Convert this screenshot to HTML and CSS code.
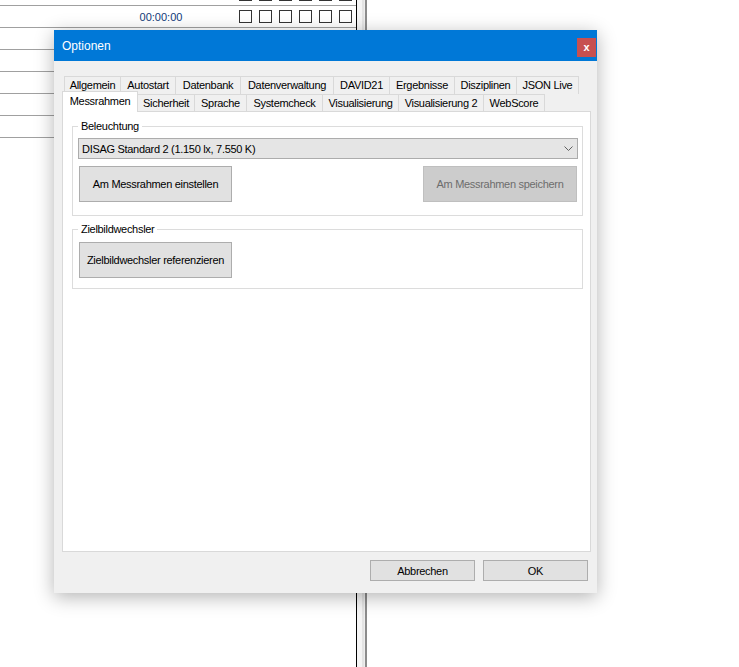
FILE: index.html
```html
<!DOCTYPE html>
<html lang="de">
<head>
    <meta charset="UTF-8">
    <title>Optionen</title>
    <link rel="stylesheet" href="styles.css">
</head>
<body>
<div class="desktop">
    <div class="list">
        <div class="row row-cut">
            <span class="cell-name"></span>
            <span class="cell-time"></span>
            <span class="checks"><i></i><i></i><i></i><i></i><i></i><i></i></span>
        </div>
        <div class="row">
            <span class="cell-name"></span>
            <span class="cell-time">00:00:00</span>
            <span class="checks"><i></i><i></i><i></i><i></i><i></i><i></i></span>
        </div>
        <div class="row"></div>
        <div class="row"></div>
        <div class="row"></div>
        <div class="row"></div>
        <div class="row"></div>
    </div>
    <div class="splitter"></div>
    <div class="view"></div>

    <div class="dialog">
        <div class="titlebar">
            <span class="title">Optionen</span>
            <span class="close">x</span>
        </div>
        <div class="dialog-body">
            <div class="tabs">
                <div class="tab-row back">
                    <span class="tab">Allgemein</span>
                    <span class="tab">Autostart</span>
                    <span class="tab">Datenbank</span>
                    <span class="tab">Datenverwaltung</span>
                    <span class="tab">DAVID21</span>
                    <span class="tab">Ergebnisse</span>
                    <span class="tab">Disziplinen</span>
                    <span class="tab">JSON Live</span>
                </div>
                <div class="tab-row front">
                    <span class="tab selected">Messrahmen</span>
                    <span class="tab">Sicherheit</span>
                    <span class="tab">Sprache</span>
                    <span class="tab">Systemcheck</span>
                    <span class="tab">Visualisierung</span>
                    <span class="tab">Visualisierung 2</span>
                    <span class="tab">WebScore</span>
                </div>
                <div class="tab-page">
                    <div class="group light">
                        <span class="group-label">Beleuchtung</span>
                        <div class="combo">
                            <span>DISAG Standard 2 (1.150 lx, 7.550 K)</span>
                            <svg width="9" height="5" viewBox="0 0 9 5"><polyline points="0.5,0.5 4.5,4.5 8.5,0.5" fill="none" stroke="#606060" stroke-width="1"/></svg>
                        </div>
                        <div class="light-buttons">
                            <button class="btn wide">Am Messrahmen einstellen</button>
                            <button class="btn wide save" disabled>Am Messrahmen speichern</button>
                        </div>
                    </div>
                    <div class="group changer">
                        <span class="group-label">Zielbildwechsler</span>
                        <button class="btn wide">Zielbildwechsler referenzieren</button>
                    </div>
                </div>
            </div>
            <div class="dialog-buttons">
                <button class="btn small">Abbrechen</button>
                <button class="btn small">OK</button>
            </div>
        </div>
    </div>
</div>
</body>
</html>
```

FILE: styles.css
```css
body {
    margin: 0;
    font-family: "Liberation Sans", Arial, sans-serif;
    font-size: 11px;
    color: #000;
}

.desktop {
    position: relative;
    display: flex;
    width: 739px;
    height: 667px;
    overflow: hidden;
    background: #fff;
}

/* background list */
.list {
    width: 356px;
}

.row {
    display: flex;
    align-items: center;
    height: 21px;
    border-bottom: 1px solid #a0a0a0;
}

.row-cut {
    margin-top: -16px;
}

.cell-name {
    width: 111px;
}

.cell-time {
    width: 100px;
    text-align: center;
    color: #123a7a;
}

.checks {
    display: flex;
    gap: 7px;
    margin-left: 28px;
}

.checks i {
    width: 13px;
    height: 13px;
    box-sizing: border-box;
    border: 1px solid #333;
    background: #fff;
}

.splitter {
    width: 11px;
    box-sizing: border-box;
    border-left: 1px solid #000;
    border-right: 2px solid #8c8c8c;
    background: linear-gradient(to right, #f5f5f5 0, #f5f5f5 5px, #e4e4e4 5px, #e4e4e4 7px, #eeeeee 7px);
}

.view {
    flex: 1;
}

/* dialog */
.dialog {
    position: absolute;
    left: 54px;
    top: 30px;
    width: 543px;
    height: 563px;
    display: flex;
    flex-direction: column;
    background: #f0f0f0;
    box-shadow: 0 4px 18px rgba(0, 0, 0, 0.3);
}

.titlebar {
    display: flex;
    align-items: center;
    height: 31px;
    padding-left: 8px;
    background: #0078d7;
}

.title {
    color: #fff;
    font-size: 12px;
}

.close {
    align-self: flex-start;
    margin: 8px 1px 0 auto;
    width: 19px;
    height: 19px;
    line-height: 18px;
    text-align: center;
    background: #c75050;
    color: #fff;
    font-weight: bold;
    font-size: 11px;
}

.dialog-body {
    flex: 1;
    display: flex;
    flex-direction: column;
    padding: 15px 6px 12px 8px;
}

.tabs {
    flex: 1;
    display: flex;
    flex-direction: column;
}

.tab-row {
    display: flex;
    align-items: flex-start;
}

.tab {
    box-sizing: border-box;
    text-align: center;
    white-space: nowrap;
    letter-spacing: -0.3px;
    background: #f0f0f0;
    border-top: 1px solid #d9d9d9;
}

.back {
    height: 18px;
    margin-left: 2px;
}

.back .tab {
    height: 18px;
    line-height: 17px;
    border-left: 1px solid #d9d9d9;
}

.back .tab:last-child { border-right: 1px solid #d9d9d9; }

.back .tab:nth-child(1) { width: 56px; }
.back .tab:nth-child(2) { width: 55px; }
.back .tab:nth-child(3) { width: 65px; }
.back .tab:nth-child(4) { width: 93px; }
.back .tab:nth-child(5) { width: 56px; }
.back .tab:nth-child(6) { width: 65px; }
.back .tab:nth-child(7) { width: 62px; }
.back .tab:nth-child(8) { width: 63px; }

.front {
    height: 17px;
}

.front .tab {
    height: 17px;
    line-height: 16px;
    border-right: 1px solid #d9d9d9;
}

.front .tab.selected {
    position: relative;
    z-index: 1;
    height: 21px;
    margin-top: -3px;
    padding-top: 2px;
    line-height: 14px;
    background: #fff;
    border-left: 1px solid #d9d9d9;
}

.front .tab:nth-child(1) { width: 76px; }
.front .tab:nth-child(2) { width: 57px; }
.front .tab:nth-child(3) { width: 52px; }
.front .tab:nth-child(4) { width: 76px; }
.front .tab:nth-child(5) { width: 76px; }
.front .tab:nth-child(6) { width: 85px; }
.front .tab:nth-child(7) { width: 61px; }

.tab-page {
    flex: 1;
    padding: 14px 7px 0 9px;
    background: #fff;
    border: 1px solid #d9d9d9;
}

.group {
    position: relative;
    border: 1px solid #dcdcdc;
}

.group-label {
    position: absolute;
    top: -7px;
    left: 5px;
    padding: 0 3px;
    line-height: 13px;
    background: #fff;
    letter-spacing: -0.3px;
}

.light {
    padding: 11px 4px 13px 5px;
}

.changer {
    margin-top: 13px;
    padding: 12px 6px 10px;
}

.combo {
    display: flex;
    align-items: center;
    justify-content: space-between;
    height: 21px;
    box-sizing: border-box;
    padding: 0 4px 0 3px;
    background: #e5e5e5;
    border: 1px solid #acacac;
    letter-spacing: -0.3px;
}

.light-buttons {
    display: flex;
    justify-content: space-between;
    margin-top: 7px;
    padding: 0 1px;
}

.btn {
    display: block;
    box-sizing: border-box;
    padding: 0;
    font-family: inherit;
    font-size: 11px;
    letter-spacing: -0.3px;
    color: #000;
    background: #e1e1e1;
    border: 1px solid #adadad;
}

.btn.wide {
    width: 153px;
    height: 36px;
}

.btn.save {
    width: 154px;
    color: #6d6d6d;
    background: #cccccc;
    border-color: #bfbfbf;
}

.dialog-buttons {
    display: flex;
    justify-content: flex-end;
    gap: 8px;
    margin: 8px 3px 0 0;
}

.btn.small {
    width: 105px;
    height: 21px;
}
```
